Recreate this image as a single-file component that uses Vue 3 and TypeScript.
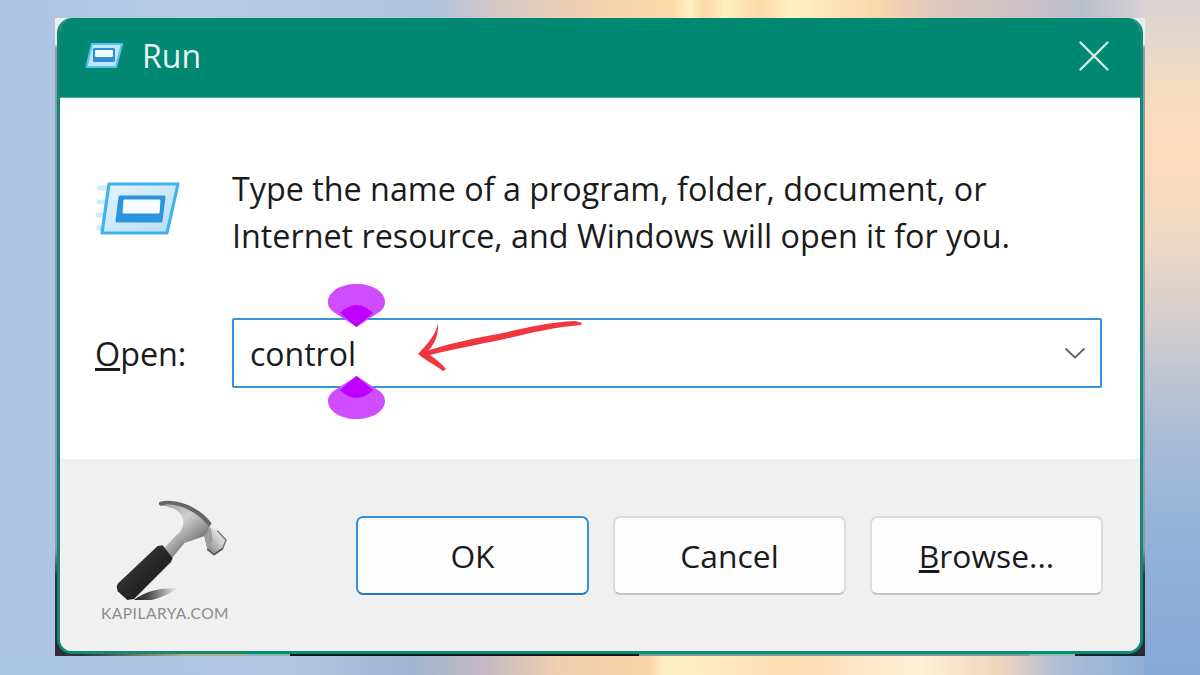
<template>
  <div class="page">
    <div class="frame">
      <div class="dialog">
        <div class="title-bar">
          <div class="title-left">
            <svg width="38" height="26" viewBox="0 0 38 26">
              <path d="M7 1H37L31 24H1.500Z" fill="#c4e5f8" stroke="#52c2f3" stroke-width="2.200" stroke-linejoin="round" />
              <rect x="8" y="5" width="22" height="14" rx="1.500" fill="#2b8fd8" />
              <rect x="10" y="7" width="18" height="7" rx="1" fill="#f2f9fd" />
            </svg>
            <span class="title">Run</span>
          </div>
          <svg class="close" width="32" height="32" viewBox="0 0 32 32">
            <path d="M2.500 2.500L29.500 29.500M29.500 2.500L2.500 29.500" stroke="#d4efe8" stroke-width="2.400" stroke-linecap="round" />
          </svg>
        </div>

        <div class="content">
          <div class="message-row">
            <svg class="run-big" width="84" height="54" viewBox="0 0 84 54">
              <defs>
                <linearGradient id="runFill" x1="0" y1="0" x2="1" y2="1">
                  <stop offset="0" stop-color="#e6f4fc" />
                  <stop offset="1" stop-color="#b5dcf4" />
                </linearGradient>
              </defs>
              <path d="M3 6H14M3 20H12M2 33H10M3 46H8" stroke="#cfeafa" stroke-width="5" stroke-linecap="round" />
              <path d="M13 2H82L71 51H6Z" fill="url(#runFill)" stroke="#3db4ee" stroke-width="3.200" stroke-linejoin="round" />
              <path d="M24 15H68L65 39H21Z" fill="#2c93de" stroke="#2c93de" stroke-width="3" stroke-linejoin="round" />
              <path d="M28 18H64L63 31H27Z" fill="#f5fbfe" stroke="#f5fbfe" stroke-width="1" stroke-linejoin="round" />
            </svg>
            <p class="message">Type the name of a program, folder, document, or<br />Internet resource, and Windows will open it for you.</p>
          </div>

          <div class="open-row">
            <label class="open-label"><u>O</u>pen:</label>
            <div class="combo">
              <span>control</span>
              <svg width="22" height="12" viewBox="0 0 22 12">
                <path d="M1.500 1.500L11 10.500L20.500 1.500" fill="none" stroke="#5f6368" stroke-width="1.800" />
              </svg>
              <!-- markers and hand-drawn arrow sit over the field -->
              <svg class="marker marker-top" width="58" height="44" viewBox="0 0 58 44">
                <path d="M28.500 43L7 29C0 24 0 20 0 18C0 8 12 0 28.500 0S57 8 57 18C57 22 55 26 50 29Z" fill="#cf4dff" />
                <path d="M28.500 43L12 29C17 24 23 21 28.500 21S40 24 45 29Z" fill="#c000ff" />
              </svg>
              <svg class="marker marker-bottom" width="58" height="44" viewBox="0 0 58 44">
                <path d="M28.500 1L7 15C0 20 0 24 0 26C0 36 12 44 28.500 44S57 36 57 26C57 22 55 18 50 15Z" fill="#cf4dff" />
                <path d="M28.500 1L12 15C17 20 23 23 28.500 23S40 20 45 15Z" fill="#c000ff" />
              </svg>
              <svg class="arrow" width="170" height="55" viewBox="0 0 170 55">
                <path d="M3 34C30 24 60 18 88 13C110 8 135 2 160 1L167 3L166 5C140 7 115 13 90 19C60 25 35 30 15 35C22 40 27 44 31 49L28 51C20 45 10 40 3 34Z" fill="#f0373d" />
                <path d="M3 34C12 24 21 15 23 3C24 15 19 26 11 33Z" fill="#f0373d" />
              </svg>
            </div>
          </div>
        </div>

        <div class="footer">
          <div class="logo">
            <svg width="130" height="105" viewBox="30 15 390 315">
              <defs>
                <linearGradient id="head" x1="0" y1="0" x2="1" y2="1">
                  <stop offset="0" stop-color="#9a9a9a" />
                  <stop offset="0.45" stop-color="#cfcfcf" />
                  <stop offset="0.75" stop-color="#929292" />
                  <stop offset="1" stop-color="#585858" />
                </linearGradient>
                <linearGradient id="neck" x1="0" y1="0" x2="1" y2="1">
                  <stop offset="0" stop-color="#dcdcdc" />
                  <stop offset="0.5" stop-color="#a0a0a0" />
                  <stop offset="1" stop-color="#565656" />
                </linearGradient>
                <linearGradient id="poll" x1="0" y1="1" x2="1" y2="0">
                  <stop offset="0" stop-color="#626262" />
                  <stop offset="0.4" stop-color="#b0b0b0" />
                  <stop offset="0.7" stop-color="#dedede" />
                  <stop offset="1" stop-color="#848484" />
                </linearGradient>
                <linearGradient id="shadow" x1="0" y1="0.500" x2="1" y2="0.500">
                  <stop offset="0" stop-color="#222" />
                  <stop offset="0.35" stop-color="#444" />
                  <stop offset="1" stop-color="#f0f0f0" />
                </linearGradient>
                <linearGradient id="grip" x1="0" y1="0" x2="1" y2="1">
                  <stop offset="0" stop-color="#4a4a4a" />
                  <stop offset="0.5" stop-color="#272727" />
                  <stop offset="1" stop-color="#161616" />
                </linearGradient>
              </defs>
              <path d="M125 335C165 300 220 292 262 295C235 318 172 340 125 335Z" fill="url(#shadow)" />
              <path d="M220 176L262 133L286 156L244 206Z" fill="url(#neck)" />
              <path d="M80 290L83 281L203 168L218 166L248 205L242 217L132 327L112 330L83 304Z" fill="url(#grip)" />
              <path d="M210 42C250 28 320 45 362 100L352 135L286 158L262 135C270 125 280 115 280 95C278 65 250 50 215 47C208 46 207 43 210 42Z" fill="url(#head)" />
              <path d="M210 35C250 25 325 45 365 100L357 110C325 67 275 44 232 43L212 47C205 44 205 38 210 35Z" fill="#666" />
              <path d="M343 138L362 112L382 122L408 150L398 176L372 194L352 178Z" fill="url(#poll)" />
              <path d="M343 138L362 112L368 152L352 178Z" fill="#9c9c9c" />
              <path d="M382 122L408 150L398 176L372 194" fill="none" stroke="#707070" stroke-width="4" stroke-linejoin="round" />
              <path d="M352 178L372 194L398 176" fill="none" stroke="#555" stroke-width="5" stroke-linejoin="round" />
            </svg>
            <span class="logo-text">KAPILARYA.COM</span>
          </div>
          <div class="buttons">
            <button class="btn primary">OK</button>
            <button class="btn">Cancel</button>
            <button class="btn"><u>B</u>rowse...</button>
          </div>
        </div>
      </div>
    </div>
  </div>
</template>

<script setup lang="ts">
</script>

<style>
html,
body {
  margin: 0;
  overflow: hidden;
}
</style>

<style scoped>
.page {
  width: 1200px;
  height: 675px;
  box-sizing: border-box;
  padding: 18px 0 0 55px;
  overflow: hidden;
  background:
    linear-gradient(180deg, #d9d3d4 0, #f5dcc0 90px, #fbdcbc 160px, #ecd8c6 250px, #d2cccf 330px, #aebed6 420px, #96b3d9 520px, #85aad6 675px) right top / 56px 100% no-repeat,
    linear-gradient(90deg, #adc5e2 0, #b7cbe3 190px, #b2c4dc 440px, #d8c8c4 500px, #f3d3ae 600px, #fcd9a8 670px, #fff2c4 690px, #fbd8a8 705px, #fff0c0 725px, #fbd8a8 760px, #fff0c4 790px, #fad6ac 880px, #e0c8bc 930px, #c9c0c8 1040px, #b9bfca 1080px, #d9d3d4 1150px) top / 100% 18px no-repeat,
    linear-gradient(90deg, #a9c3e3 0, #b4c7e1 290px, #9fb4d0 410px, #c2b9c4 480px, #f0cfae 560px, #fad4a8 650px, #fff0c8 665px, #fcdcb4 800px, #fff0d8 920px, #f0d4bc 1000px, #b0bed6 1060px, #93b1d9 1130px, #85aad6 1200px) bottom / 100% 21px no-repeat,
    #adc4e2;
  font-family: "Open Sans", "Noto Sans", sans-serif;
  color: #1b1b1b;
}

.frame {
  width: 1090px;
  height: 638px;
  box-sizing: border-box;
  padding-left: 2px;
  background:
    linear-gradient(90deg, #2f3038 0, #2f3038 25px, #b4ae84 130px, #b4ae84 190px, #7ebcae 190px, #7ebcae 235px, #0c1a1f 235px, #0c1a1f 584px, #6fa598 584px, #6fa598 975px, #86c4b6 975px, #86c4b6 1020px, #15272c 1020px, #15272c 1090px) bottom / 100% 2px no-repeat,
    linear-gradient(180deg, #e8eef0 0, #e8eef0 26px, #8e9aa8 30px, #8e9aa8 530px, #2b2d36 560px, #2b2d36 100%);
}

.dialog {
  width: 1086px;
  height: 636px;
  box-sizing: border-box;
  display: flex;
  flex-direction: column;
  background: #fff;
  border: 3px solid #0f8a77;
  border-top: none;
  border-radius: 15px;
  overflow: hidden;
}

.title-bar {
  height: 80px;
  flex: none;
  box-sizing: border-box;
  padding: 0 30px 4px 25px;
  display: flex;
  align-items: center;
  justify-content: space-between;
  background: #008872;
  border-bottom: 1px solid #4dab9c;
}

.title-left {
  display: flex;
  align-items: center;
  gap: 19px;
}

.title {
  font-size: 32px;
  color: #e6f5f1;
}

.close {
  flex: none;
}

.content {
  flex: 1;
  padding: 67px 38px 0 35px;
  display: flex;
  flex-direction: column;
}

.message-row {
  display: flex;
  gap: 52px;
}

.run-big {
  flex: none;
  margin: 17px 0 0 1px;
}

.message {
  margin: 0;
  font-size: 32.300px;
  line-height: 47px;
  white-space: nowrap;
}

.open-row {
  display: flex;
  align-items: center;
  margin-top: 59px;
}

.open-label {
  width: 137px;
  flex: none;
  font-size: 32.300px;
}

.combo {
  position: relative;
  flex: 1;
  height: 70px;
  box-sizing: border-box;
  padding: 0 14px 0 16px;
  display: flex;
  align-items: center;
  justify-content: space-between;
  border: 2px solid #3592da;
  border-radius: 2px;
  font-size: 32px;
}

.marker {
  position: absolute;
  left: 94px;
}

.marker-top {
  top: -36px;
}

.marker-bottom {
  bottom: -33px;
}

.arrow {
  position: absolute;
  left: 181px;
  top: 0;
}

.footer {
  height: 192px;
  flex: none;
  box-sizing: border-box;
  padding: 0 37px 0 40px;
  display: flex;
  align-items: flex-start;
  background: #f0f0f0;
}

.logo {
  width: 130px;
  margin-top: 36px;
  display: flex;
  flex-direction: column;
  align-items: center;
}

.logo-text {
  margin-top: 4px;
  font-family: "Lato", sans-serif;
  font-size: 15.500px;
  letter-spacing: 0.5px;
  color: #8c8c8c;
  white-space: nowrap;
}

.buttons {
  margin: 57px 0 0 auto;
  display: flex;
  gap: 24px;
}

.btn {
  width: 233px;
  height: 79px;
  padding: 0;
  background: #fdfdfd;
  border: 2px solid #dcdcdc;
  border-bottom-color: #c4c4c4;
  border-radius: 7px;
  font: inherit;
  font-size: 31.800px;
  color: #1b1b1b;
}

.btn.primary {
  border-color: #3592da;
  border-bottom-color: #1f7cc4;
}
</style>
